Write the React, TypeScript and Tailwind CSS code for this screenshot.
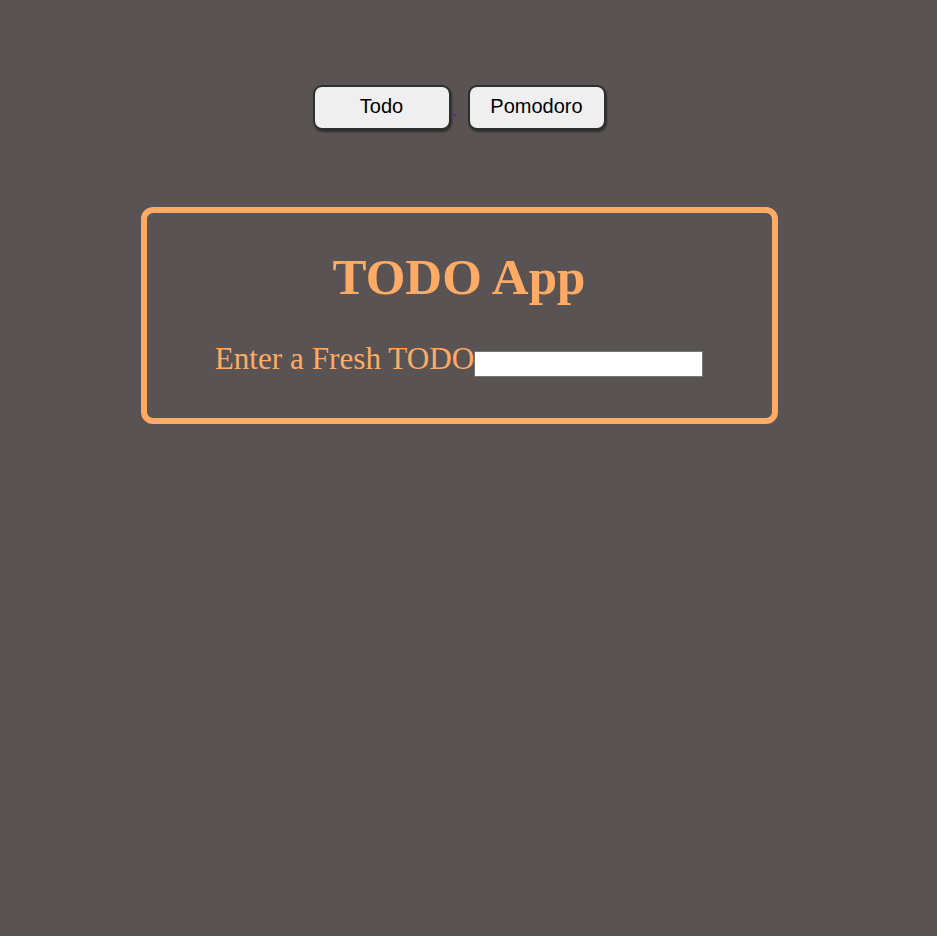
import React, { useState } from "react";

const NavButton = ({ label }: { label: string }) => (
  <button className="w-[138px] h-[45px] rounded-[9px] border-2 border-[#2f2f2f] bg-[#efefef] pb-[4px] text-[20px] text-black shadow-[1px_2px_2px_rgba(0,0,0,0.45)] font-['Liberation_Sans',Arial,sans-serif]">
    {label}
  </button>
);

const App = () => {
  const [todo, setTodo] = useState("");

  return (
    <div className="min-h-[936px] w-full bg-[#595353]">
      <div className="w-[918px] flex flex-col items-center pt-[85px]">
        <div className="flex items-start">
          <NavButton label="Todo" />
          <span className="mt-[29px] w-[5px] h-[2px] bg-[#5a2b9b]" />
          <span className="w-[12px]" />
          <NavButton label="Pomodoro" />
        </div>

        <div className="mt-[77px] w-[637px] h-[217px] rounded-[12px] border-[6px] border-[#ffab66] flex flex-col items-center pt-[36px] font-['Liberation_Serif','Times_New_Roman',serif] text-[#ffab66]">
          <h1 className="text-[51px] font-bold leading-[56px]">TODO App</h1>
          <form className="mt-[37px] flex items-start">
            <label className="text-[31.2px] leading-[34px]">Enter a Fresh TODO</label>
            <input
              type="text"
              value={todo}
              onChange={(e) => setTodo(e.target.value)}
              className="mt-[9px] w-[229px] h-[26px] bg-white border border-[#767676] outline-none"
            />
          </form>
        </div>
      </div>
    </div>
  );
};

export default App;
